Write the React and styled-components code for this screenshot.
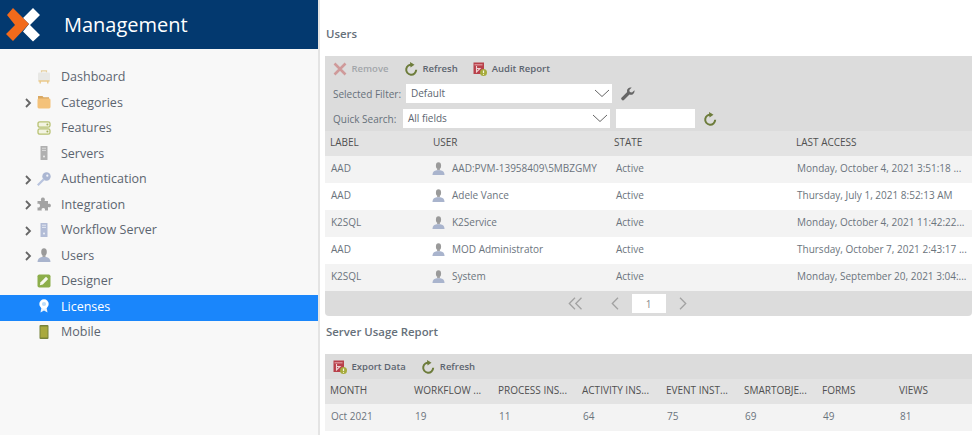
import styled, { createGlobalStyle } from "styled-components";

const GlobalStyle = createGlobalStyle`
  html, body {
    margin: 0;
    padding: 0;
    background: #fff;
    font-family: "Open Sans", "Liberation Sans", sans-serif;
    overflow: hidden;
  }
`;

const navItems = [
  { label: "Dashboard", icon: "dashboard" },
  { label: "Categories", icon: "folder", expandable: true },
  { label: "Features", icon: "features" },
  { label: "Servers", icon: "server" },
  { label: "Authentication", icon: "key", expandable: true },
  { label: "Integration", icon: "puzzle", expandable: true },
  { label: "Workflow Server", icon: "workflow", expandable: true },
  { label: "Users", icon: "user", expandable: true },
  { label: "Designer", icon: "designer" },
  { label: "Licenses", icon: "license", active: true },
  { label: "Mobile", icon: "mobile" },
];

const users = [
  ["AAD", "AAD:PVM-13958409\\5MBZGMY", "Active", "Monday, October 4, 2021 3:51:18 ..."],
  ["AAD", "Adele Vance", "Active", "Thursday, July 1, 2021 8:52:13 AM"],
  ["K2SQL", "K2Service", "Active", "Monday, October 4, 2021 11:42:22..."],
  ["AAD", "MOD Administrator", "Active", "Thursday, October 7, 2021 2:43:17 ..."],
  ["K2SQL", "System", "Active", "Monday, September 20, 2021 3:04:..."],
];

const usageHeads = ["MONTH", "WORKFLOW ...", "PROCESS INS...", "ACTIVITY INS...", "EVENT INST...", "SMARTOBJE...", "FORMS", "VIEWS"];
const usageRow = ["Oct 2021", "19", "11", "64", "75", "69", "49", "81"];

function NavIcon({ name }) {
  switch (name) {
    case "dashboard":
      return (
        <svg width="14" height="14" viewBox="0 0 14 14">
          <path d="M4.500 2.500V.8h5v1.700" fill="none" stroke="#e5cfa0" strokeWidth="1.200" />
          <rect x="1" y="2.500" width="12" height="8.500" rx="1" fill="#e8e8e5" />
          <path d="M3.500 11l-.5 2.500M10.500 11l.5 2.500M1.500 11h11" stroke="#eac98a" strokeWidth="1.300" />
        </svg>
      );
    case "folder":
      return (
        <svg width="14" height="14" viewBox="0 0 14 14">
          <path d="M1 1h4.500l1 1.300H12V4H1z" fill="#d9a862" />
          <rect x="0.500" y="3.500" width="13" height="10" rx="1.400" fill="#f4c27a" />
        </svg>
      );
    case "features":
      return (
        <svg width="14" height="14" viewBox="0 0 14 14">
          <rect x="1" y="0.800" width="12" height="5.400" rx="1.800" fill="#f3f4e2" stroke="#b8c273" strokeWidth="1.300" />
          <rect x="1" y="7.800" width="12" height="5.400" rx="1.800" fill="#f3f4e2" stroke="#b8c273" strokeWidth="1.300" />
          <circle cx="10.400" cy="3.500" r="1" fill="#a3ae5c" />
          <circle cx="10.400" cy="10.500" r="1" fill="#a3ae5c" />
        </svg>
      );
    case "server":
      return (
        <svg width="14" height="14" viewBox="0 0 14 14">
          <rect x="3.500" y="0" width="7" height="14" rx="0.500" fill="#b0b0b0" />
          <path d="M5 2.200h4M5 4.400h4" stroke="#dcdcdc" />
          <circle cx="7" cy="10.500" r="1" fill="#ececec" />
        </svg>
      );
    case "key":
      return (
        <svg width="14" height="14" viewBox="0 0 14 14">
          <circle cx="9.500" cy="4.500" r="4.200" fill="#aab6d2" />
          <circle cx="10.300" cy="3.700" r="1.100" fill="#f2f4f9" />
          <path d="M7 7L.8 13.200" stroke="#b9c4de" strokeWidth="2.200" />
        </svg>
      );
    case "puzzle":
      return (
        <svg width="14" height="14" viewBox="0 0 14 14">
          <path
            d="M0.500 4h3.700C3.400 2.600 4 .6 5.900.6S8.400 2.600 7.600 4H11v3c1.200-.8 2.900-.3 2.900 1.500S12.200 10.800 11 10v3.500H7.800c.6-1.200.1-2.500-1.500-2.500S4.200 12.300 4.800 13.500H.5v-3.200c1.200.6 2.500 0 2.500-1.600S1.700 6.500.5 7.100z"
            fill="#a3a3a3"
          />
        </svg>
      );
    case "workflow":
      return (
        <svg width="14" height="14" viewBox="0 0 14 14">
          <rect x="3.500" y="0" width="7" height="14" rx="0.500" fill="#b2bcd6" />
          <path d="M5 2.200h4M5 4.400h4" stroke="#e4e8f2" />
          <circle cx="7" cy="10.500" r="1" fill="#eef0f6" />
        </svg>
      );
    case "user":
      return <UserGlyph size={14} />;
    case "designer":
      return (
        <svg width="14" height="14" viewBox="0 0 14 14">
          <rect x="0.500" y="0.500" width="13" height="13" rx="1.800" fill="#8cae4a" />
          <path d="M2.800 11.200l.8-3 5.400-5.400 2.200 2.200-5.400 5.400z" fill="#f6f8ee" />
        </svg>
      );
    case "license":
      return (
        <svg width="14" height="14" viewBox="0 0 14 14">
          <path d="M4.500 8L3.500 13.500 7 11.500 10.500 13.500 9.500 8z" fill="#e8f2fc" />
          <circle cx="7" cy="5" r="4.700" fill="#fff" />
          <circle cx="7" cy="5" r="2.100" fill="#bcdcf8" />
        </svg>
      );
    default:
      return (
        <svg width="14" height="14" viewBox="0 0 14 14">
          <rect x="2.500" y="0" width="9" height="14" rx="1" fill="#77823a" />
          <rect x="3.500" y="1.500" width="7" height="11" fill="#a9a93f" />
        </svg>
      );
  }
}

function UserGlyph({ size }) {
  return (
    <svg width={size} height={size} viewBox="0 0 14 14">
      <ellipse cx="7" cy="4" rx="2.800" ry="3.700" fill="#9a9a9a" />
      <path d="M5.500 7h3v2H5.500z" fill="#a3a3a3" />
      <path d="M0.500 14c0-3 2-4.800 4.500-5h4c2.500.2 4.500 2 4.500 5z" fill="#a9b4cd" />
    </svg>
  );
}

function RefreshIcon() {
  return (
    <svg width="14" height="14" viewBox="0 0 14 14">
      <path d="M8.300 2.800A5 5 0 1 0 12.200 7.800" fill="none" stroke="#6d7c3b" strokeWidth="2" />
      <path d="M6 0L10.500 2.800 6.500 5.500z" fill="#6d7c3b" />
    </svg>
  );
}

function ReportIcon() {
  return (
    <svg width="14" height="14" viewBox="0 0 14 14">
      <rect x="0.500" y="0.500" width="10.500" height="11.500" fill="#b8404a" />
      <path d="M1.500 2h8v1.500h-8z" fill="#d98a90" />
      <path d="M3.500 4v6l3.500-3.500H3.500" fill="none" stroke="#f0d4d6" strokeWidth="1.100" />
      <circle cx="10.500" cy="10.500" r="3.500" fill="#a6ab3c" />
      <path d="M10.500 8.500v2.500" stroke="#f5f5dc" strokeWidth="1.200" />
      <circle cx="10.500" cy="12.300" r="0.600" fill="#f5f5dc" />
    </svg>
  );
}

function RemoveIcon() {
  return (
    <svg width="14" height="14" viewBox="0 0 14 14">
      <path d="M1.500 1.500l11 11M12.500 1.500l-11 11" stroke="#cf9a9a" strokeWidth="2.600" />
    </svg>
  );
}

function WrenchIcon() {
  return (
    <svg width="14" height="14" viewBox="0 0 14 14">
      <path
        d="M13.500 3.200L11 5.400 8.800 5 8.300 2.900 10.700.6C8.500-.2 6 1.300 6 3.800c0 .5.100 1 .2 1.300L.7 10.400a1.700 1.700 0 0 0 2.500 2.400l5.300-5.200c2.600 1 5.500-1.200 5-4.400z"
        fill="#666"
      />
    </svg>
  );
}

function Caret() {
  return (
    <svg width="16" height="9" viewBox="0 0 16 9">
      <path d="M1 1l7 6.500L15 1" fill="none" stroke="#666" strokeWidth="1" />
    </svg>
  );
}

function Pager() {
  return (
    <PagerBar>
      <PagerBack>
        <svg width="15" height="13" viewBox="0 0 15 13">
          <path d="M7 .8L1.300 6.500 7 12.200M13.500.8L7.800 6.500l5.700 5.700" fill="none" stroke="#a2a2a2" strokeWidth="1.300" />
        </svg>
        <svg width="8" height="13" viewBox="0 0 8 13">
          <path d="M7 .8L1.300 6.500 7 12.200" fill="none" stroke="#a2a2a2" strokeWidth="1.300" />
        </svg>
      </PagerBack>
      <PageNumber>1</PageNumber>
      <svg width="8" height="13" viewBox="0 0 8 13">
        <path d="M1 .8l5.700 5.700L1 12.200" fill="none" stroke="#a2a2a2" strokeWidth="1.300" />
      </svg>
    </PagerBar>
  );
}

export default function App() {
  return (
    <>
      <GlobalStyle />
      <Page>
        <Sidebar>
          <Brand>
            <svg width="46" height="49" viewBox="0 0 46 49">
              <path d="M33 8l7 7-10 10 10 10-7 6.500-10-10 6-7.500-6-6z" fill="#fff" />
              <path d="M7 15l6-7 16 16-16 17-7-7 9-9z" fill="#f26a1b" />
            </svg>
            <BrandName>Management</BrandName>
          </Brand>
          <NavList>
            {navItems.map((item) => (
              <NavRow key={item.label} $active={item.active}>
                <Arrow>
                  {item.expandable && (
                    <svg width="7" height="10" viewBox="0 0 7 10">
                      <path d="M1 1l4 4-4 4" fill="none" stroke="#666" strokeWidth="1.800" />
                    </svg>
                  )}
                </Arrow>
                <NavIcon name={item.icon} />
                <NavLabel>{item.label}</NavLabel>
              </NavRow>
            ))}
          </NavList>
        </Sidebar>
        <Main>
          <SectionTitle>Users</SectionTitle>
          <Panel>
            <Toolbar>
              <Action $muted>
                <RemoveIcon />
                Remove
              </Action>
              <Action>
                <RefreshIcon />
                Refresh
              </Action>
              <Action>
                <ReportIcon />
                Audit Report
              </Action>
            </Toolbar>
            <FilterRow>
              <FilterLabel $width={73}>Selected Filter:</FilterLabel>
              <SelectBox $width={206}>
                Default
                <Caret />
              </SelectBox>
              <WrenchIcon />
            </FilterRow>
            <FilterRow $gap={6}>
              <FilterLabel $width={70}>Quick Search:</FilterLabel>
              <SelectBox $width={207}>
                All fields
                <Caret />
              </SelectBox>
              <SearchInput />
              <RefreshIcon />
            </FilterRow>
            <UsersHead>
              <span>LABEL</span>
              <span>USER</span>
              <span>STATE</span>
              <span>LAST ACCESS</span>
            </UsersHead>
            {users.map((u) => (
              <UsersRow key={u[1]}>
                <span>{u[0]}</span>
                <UserCell>
                  <UserGlyph size={13} />
                  {u[1]}
                </UserCell>
                <span>{u[2]}</span>
                <span>{u[3]}</span>
              </UsersRow>
            ))}
            <Pager />
          </Panel>
          <SectionTitle $spaced>Server Usage Report</SectionTitle>
          <Panel>
            <Toolbar>
              <Action>
                <ReportIcon />
                Export Data
              </Action>
              <Action>
                <RefreshIcon />
                Refresh
              </Action>
            </Toolbar>
            <UsageHead>
              {usageHeads.map((h) => (
                <span key={h}>{h}</span>
              ))}
            </UsageHead>
            <UsageRow>
              {usageRow.map((v, i) => (
                <span key={i}>{v}</span>
              ))}
            </UsageRow>
          </Panel>
        </Main>
      </Page>
    </>
  );
}

const Page = styled.div`
  display: flex;
  width: 977px;
  height: 435px;
  overflow: hidden;
`;

const Sidebar = styled.aside`
  flex: 0 0 320px;
  box-sizing: border-box;
  background: #f8f8f8;
  border-right: 2px solid #e4e4e4;
`;

const Brand = styled.header`
  display: flex;
  align-items: center;
  height: 49px;
  background: #03396f;
`;

const BrandName = styled.h1`
  margin: 0 0 0 18px;
  font-size: 20px;
  font-weight: 400;
  color: #fff;
`;

const NavList = styled.nav`
  padding-top: 16.5px;
`;

const NavRow = styled.div`
  display: flex;
  align-items: center;
  height: 25.5px;
  box-sizing: border-box;
  padding: 0 0 3px 25px;
  font-size: 12.5px;
  color: ${(p) => (p.$active ? "#fff" : "#5c6570")};
  background: ${(p) => (p.$active ? "#1a86fb" : "transparent")};
`;

const Arrow = styled.span`
  display: flex;
  flex: 0 0 12px;
  padding-top: 2px;
`;

const NavLabel = styled.span`
  margin-left: 10px;
`;

const Main = styled.main`
  flex: 1;
  min-width: 0;
  padding: 24px 5px 0;
`;

const SectionTitle = styled.h2`
  margin: ${(p) => (p.$spaced ? "6px" : "0")} 0 12px 1px;
  font-size: 11.4px;
  line-height: 20px;
  font-weight: 600;
  color: #66707a;
`;

const Panel = styled.section`
  background: #dcdcdc;
  border-radius: 0 0 4px 4px;
  color: #5c6570;
`;

const Toolbar = styled.div`
  display: flex;
  align-items: center;
  gap: 15.5px;
  height: 25px;
  padding-left: 8px;
`;

const Action = styled.span`
  display: flex;
  align-items: center;
  gap: 4.5px;
  font-size: 9.5px;
  font-weight: 600;
  color: ${(p) => (p.$muted ? "#a2a6aa" : "#5c6570")};
`;

const FilterRow = styled.div`
  display: flex;
  align-items: center;
  gap: ${(p) => p.$gap || 9}px;
  height: 25px;
  padding-left: 8px;
`;

const FilterLabel = styled.label`
  flex: 0 0 ${(p) => p.$width}px;
  margin-right: ${(p) => (p.$width > 70 ? -9 : -6)}px;
  font-size: 10px;
  color: #66707a;
`;

const SelectBox = styled.div`
  display: flex;
  align-items: center;
  justify-content: space-between;
  box-sizing: border-box;
  width: ${(p) => p.$width}px;
  height: 19px;
  padding: 0 2px 1px 5px;
  background: #fff;
  font-size: 10px;
  color: #5c6570;
`;

const SearchInput = styled.div`
  width: 79px;
  height: 19px;
  background: #fff;
  margin-right: 2px;
`;

const UsersHead = styled.div`
  display: grid;
  grid-template-columns: 103px 181px 182px minmax(0, 1fr);
  align-items: center;
  box-sizing: border-box;
  height: 25px;
  padding: 0 0 3px 5px;
  background: #e3e3e3;
  font-size: 10px;
  color: #505050;
`;

const UsersRow = styled.div`
  display: grid;
  grid-template-columns: 101px 184px 181px minmax(0, 1fr);
  align-items: center;
  box-sizing: border-box;
  height: 27px;
  padding: 0 0 3px 6px;
  background: #fff;
  font-size: 10px;
  color: #6b747d;
  white-space: nowrap;

  &:nth-child(odd) {
    background: #f3f3f3;
  }
`;

const UserCell = styled.span`
  display: flex;
  align-items: center;
  gap: 7px;
`;

const PagerBar = styled.div`
  display: grid;
  grid-template-columns: 1fr auto 1fr;
  align-items: center;
  gap: 13px;
  height: 25px;
`;

const PagerBack = styled.div`
  display: flex;
  align-items: center;
  justify-content: flex-end;
  gap: 28px;
`;

const PageNumber = styled.span`
  display: flex;
  align-items: center;
  justify-content: center;
  width: 34px;
  height: 19px;
  background: #fff;
  font-size: 10px;
  color: #8a8a8a;
`;

const UsageHead = styled.div`
  display: grid;
  grid-template-columns: 84px 84px 84px 84px 78px 78px 77px minmax(0, 1fr);
  align-items: center;
  box-sizing: border-box;
  height: 25px;
  padding: 0 0 3px 5px;
  background: #e3e3e3;
  font-size: 10px;
  color: #505050;
  white-space: nowrap;
`;

const UsageRow = styled.div`
  display: grid;
  grid-template-columns: 84px 84px 84px 84px 78px 78px 77px minmax(0, 1fr);
  align-items: center;
  box-sizing: border-box;
  height: 27px;
  padding: 0 0 3px 6px;
  background: #f3f3f3;
  font-size: 10px;
  color: #6b747d;
`;
